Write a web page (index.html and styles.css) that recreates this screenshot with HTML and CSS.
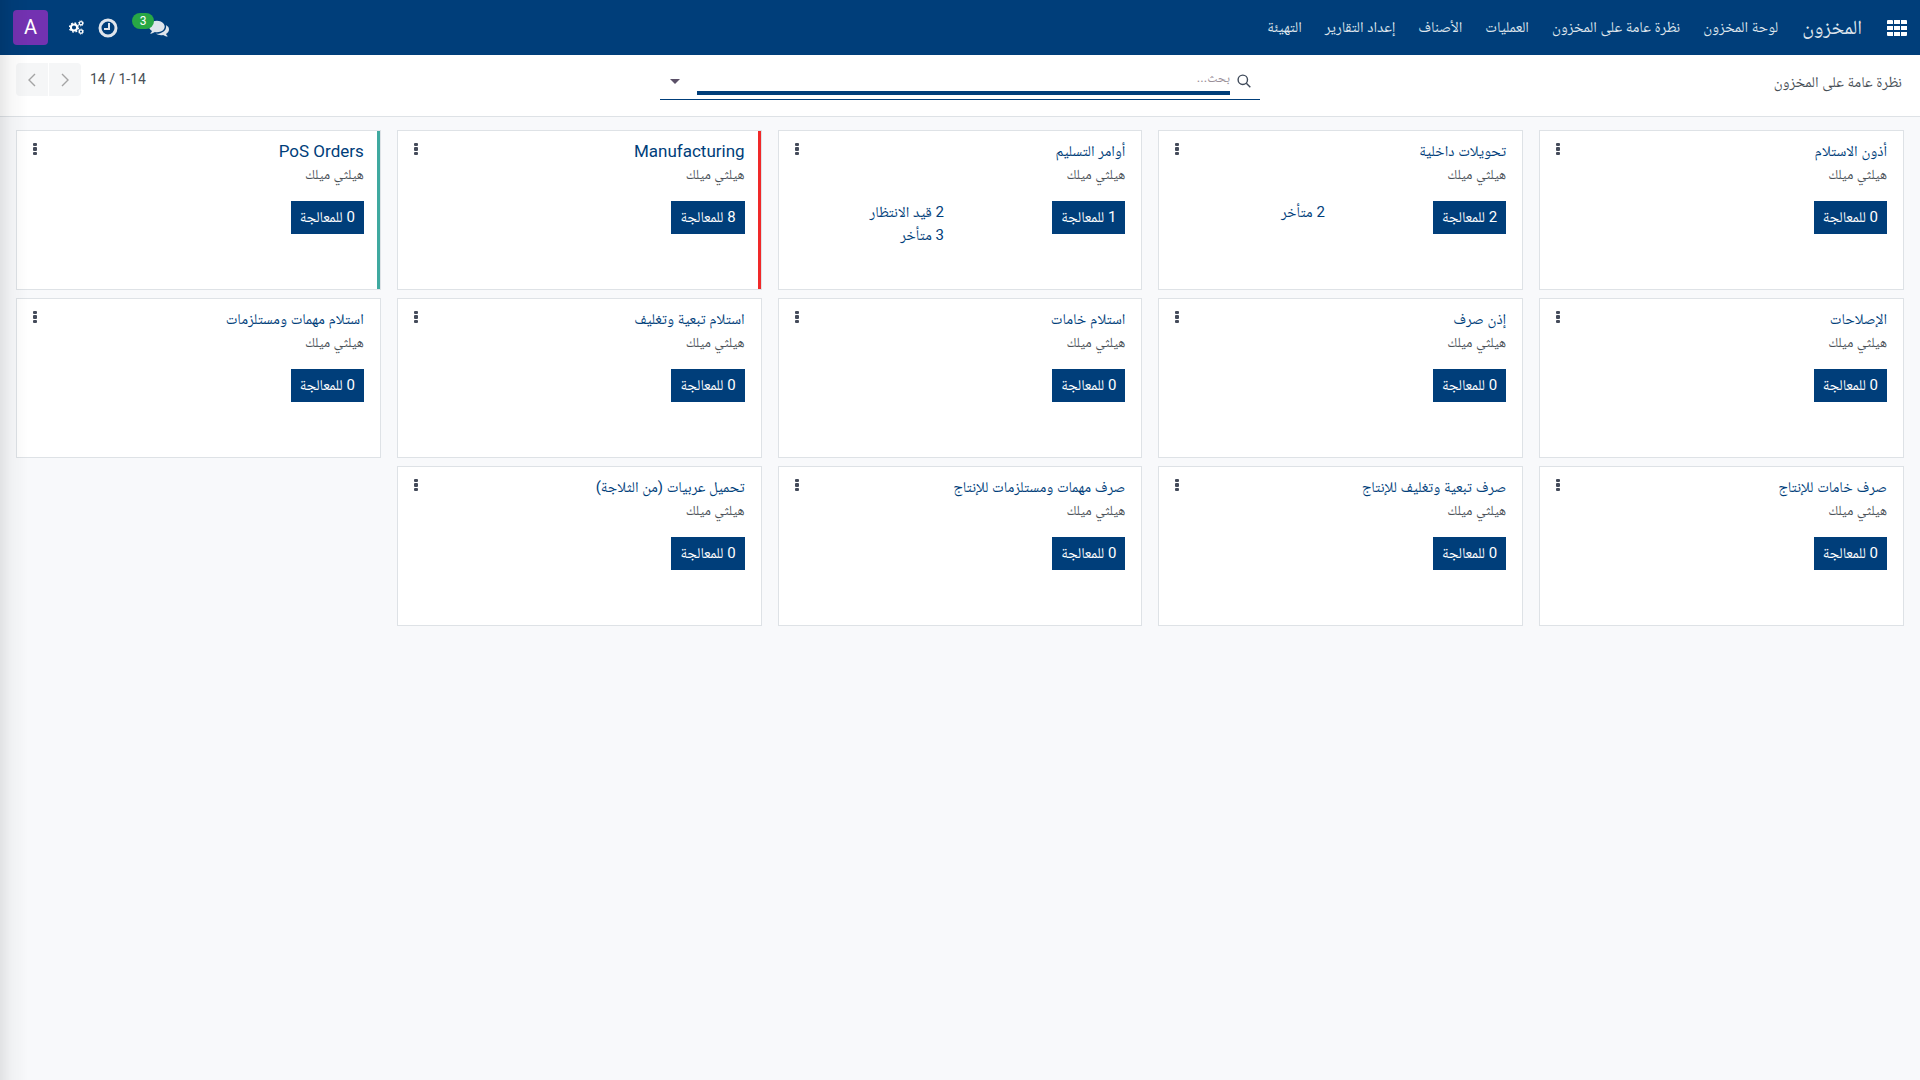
FILE: index.html
```html
<!DOCTYPE html>
<html lang="ar" dir="rtl">
<head>
<meta charset="utf-8">
<meta name="viewport" content="width=device-width, initial-scale=1">
<title>نظرة عامة على المخزون</title>
<link rel="stylesheet" href="styles.css">
</head>
<body>
<svg class="sprite" aria-hidden="true">
  <symbol id="kebab" viewBox="0 0 4 12"><path d="M1 0h2q1 0 1 1v1q0 1-1 1H1Q0 3 0 2V1Q0 0 1 0zM1 4h2q1 0 1 1v2q0 1-1 1H1Q0 8 0 7V5q0-1 1-1zM1 9h2q1 0 1 1v1q0 1-1 1H1q-1 0-1-1v-1q0-1 1-1z"/></symbol>
</svg>

<header class="navbar">
  <button class="apps" aria-label="التطبيقات">
    <svg viewBox="0 0 20 16" width="20" height="16"><path d="M1 0h4q1 0 1 1v3H0V1Q0 0 1 0zM7 0h6v4H7zM14 0h5q1 0 1 1v3h-6zM0 6h6v4H0zM7 6h6v4H7zM14 6h6v4h-6zM0 12h6v4H1q-1 0-1-1zM7 12h6v4H7zM14 12h6v3q0 1-1 1h-5z" fill="#fff"/></svg>
  </button>
  <a class="brand" href="#">المخزون</a>
  <nav class="menu">
    <a href="#">لوحة المخزون</a>
    <a href="#">نظرة عامة على المخزون</a>
    <a href="#">العمليات</a>
    <a href="#">الأصناف</a>
    <a href="#">إعداد التقارير</a>
    <a href="#">التهيئة</a>
  </nav>
  <div class="systray">
    <button class="messages" aria-label="المحادثات">
      <svg viewBox="0 0 1792 1792" width="20" height="20"><path d="M1408 768q0 139-94 257t-256.500 186.500-353.500 68.500q-86 0-176-16-124 88-278 128-36 9-86 16h-3q-11 0-20.500-8t-11.500-21q-1-3-1-6.500t.5-6.500 2-6l2.500-5 3.500-5.500 4-5 4.500-5 4-4.500q5-6 23-25t26-29.500 22.500-29 25-38.500 20.500-44q-124-72-195-177t-71-224q0-139 94-257t256.500-186.500 353.500-68.500 353.500 68.500 256.500 186.500 94 257zm384 256q0 120-71 224.500t-195 176.500q10 24 20.500 44t25 38.500 22.500 29 26 29.500 23 25q1 1 4 4.500t4.500 5 4 5 3.500 5.500l2.500 5 2 6 .5 6.500-1 6.500q-3 14-13 22t-22 7q-50-7-86-16-154-40-278-128-90 16-176 16-271 0-472-132 58 4 88 4 161 0 309-45t264-129q125-92 192-212t67-254q0-77-23-152 129 71 204 178t75 230z" fill="#dfe5ec"/></svg>
      <span class="badge">3</span>
    </button>
    <button aria-label="الأنشطة">
      <svg viewBox="0 0 20 20" width="20" height="20" fill="none" stroke="#dfe5ec"><circle cx="10" cy="10" r="8" stroke-width="3"/><path d="M11 5v6H6" stroke-width="2"/></svg>
    </button>
    <button aria-label="الإعدادات">
      <svg viewBox="0 0 15 15" width="15" height="15" fill="none" stroke="#fff"><circle cx="5" cy="7.500" r="3.100" stroke-width="2"/><circle cx="5" cy="7.500" r="4.500" stroke-width="1.400" stroke-dasharray="1.770 1.764"/><circle cx="12" cy="3.300" r="1.700" stroke-width="1.300"/><circle cx="12" cy="3.300" r="2.600" stroke-width=".8" stroke-dasharray="1.020"/><circle cx="12" cy="11.600" r="1.700" stroke-width="1.300"/><circle cx="12" cy="11.600" r="2.600" stroke-width=".8" stroke-dasharray="1.020"/></svg>
    </button>
    <button class="avatar">A</button>
  </div>
</header>

<section class="control-panel">
  <h1 class="breadcrumb">نظرة عامة على المخزون</h1>
  <form class="search" role="search">
    <svg viewBox="0 0 14 14" width="14" height="14" fill="none" stroke="#3f4a5a" stroke-width="1.400"><circle cx="5.800" cy="5.800" r="4.700"/><path d="M9.300 9.300l4 4"/></svg>
    <input type="text" placeholder="بحث..." aria-label="بحث">
    <button type="button" class="toggle" aria-label="خيارات البحث"><svg viewBox="0 0 10 5" width="10" height="5"><path d="M0 0h10L5 5z" fill="#5b5068"/></svg></button>
  </form>
  <div class="pager">
    <span class="count">1-14 / 14</span>
    <div class="pager-buttons">
      <button aria-label="السابق"><svg viewBox="0 0 8 14" width="8" height="14"><path d="M1 1l6 6-6 6"/></svg></button>
      <button aria-label="التالي"><svg viewBox="0 0 8 14" width="8" height="14"><path d="M7 1L1 7l6 6"/></svg></button>
    </div>
  </div>
</section>

<main class="kanban">
  <article class="card">
    <div class="card-head"><a href="#">أذون الاستلام</a><button class="kebab" aria-label="قائمة"><svg width="4" height="12"><use href="#kebab"/></svg></button></div>
    <p class="company">هيلثي ميلك</p>
    <div class="card-body"><div><button class="process">0 للمعالجة</button></div></div>
  </article>
  <article class="card">
    <div class="card-head"><a href="#">تحويلات داخلية</a><button class="kebab" aria-label="قائمة"><svg width="4" height="12"><use href="#kebab"/></svg></button></div>
    <p class="company">هيلثي ميلك</p>
    <div class="card-body"><div><button class="process">2 للمعالجة</button></div><div class="stats"><a href="#">2 متأخر</a></div></div>
  </article>
  <article class="card">
    <div class="card-head"><a href="#">أوامر التسليم</a><button class="kebab" aria-label="قائمة"><svg width="4" height="12"><use href="#kebab"/></svg></button></div>
    <p class="company">هيلثي ميلك</p>
    <div class="card-body"><div><button class="process">1 للمعالجة</button></div><div class="stats"><a href="#">2 قيد الانتظار</a><a href="#">3 متأخر</a></div></div>
  </article>
  <article class="card card-red">
    <div class="card-head"><a class="latin" href="#">Manufacturing</a><button class="kebab" aria-label="قائمة"><svg width="4" height="12"><use href="#kebab"/></svg></button></div>
    <p class="company">هيلثي ميلك</p>
    <div class="card-body"><div><button class="process">8 للمعالجة</button></div></div>
  </article>
  <article class="card card-teal">
    <div class="card-head"><a class="latin" href="#">PoS Orders</a><button class="kebab" aria-label="قائمة"><svg width="4" height="12"><use href="#kebab"/></svg></button></div>
    <p class="company">هيلثي ميلك</p>
    <div class="card-body"><div><button class="process">0 للمعالجة</button></div></div>
  </article>
  <article class="card">
    <div class="card-head"><a href="#">الإصلاحات</a><button class="kebab" aria-label="قائمة"><svg width="4" height="12"><use href="#kebab"/></svg></button></div>
    <p class="company">هيلثي ميلك</p>
    <div class="card-body"><div><button class="process">0 للمعالجة</button></div></div>
  </article>
  <article class="card">
    <div class="card-head"><a href="#">إذن صرف</a><button class="kebab" aria-label="قائمة"><svg width="4" height="12"><use href="#kebab"/></svg></button></div>
    <p class="company">هيلثي ميلك</p>
    <div class="card-body"><div><button class="process">0 للمعالجة</button></div></div>
  </article>
  <article class="card">
    <div class="card-head"><a href="#">استلام خامات</a><button class="kebab" aria-label="قائمة"><svg width="4" height="12"><use href="#kebab"/></svg></button></div>
    <p class="company">هيلثي ميلك</p>
    <div class="card-body"><div><button class="process">0 للمعالجة</button></div></div>
  </article>
  <article class="card">
    <div class="card-head"><a href="#">استلام تبعية وتغليف</a><button class="kebab" aria-label="قائمة"><svg width="4" height="12"><use href="#kebab"/></svg></button></div>
    <p class="company">هيلثي ميلك</p>
    <div class="card-body"><div><button class="process">0 للمعالجة</button></div></div>
  </article>
  <article class="card">
    <div class="card-head"><a href="#">استلام مهمات ومستلزمات</a><button class="kebab" aria-label="قائمة"><svg width="4" height="12"><use href="#kebab"/></svg></button></div>
    <p class="company">هيلثي ميلك</p>
    <div class="card-body"><div><button class="process">0 للمعالجة</button></div></div>
  </article>
  <article class="card">
    <div class="card-head"><a href="#">صرف خامات للإنتاج</a><button class="kebab" aria-label="قائمة"><svg width="4" height="12"><use href="#kebab"/></svg></button></div>
    <p class="company">هيلثي ميلك</p>
    <div class="card-body"><div><button class="process">0 للمعالجة</button></div></div>
  </article>
  <article class="card">
    <div class="card-head"><a href="#">صرف تبعية وتغليف للإنتاج</a><button class="kebab" aria-label="قائمة"><svg width="4" height="12"><use href="#kebab"/></svg></button></div>
    <p class="company">هيلثي ميلك</p>
    <div class="card-body"><div><button class="process">0 للمعالجة</button></div></div>
  </article>
  <article class="card">
    <div class="card-head"><a href="#">صرف مهمات ومستلزمات للإنتاج</a><button class="kebab" aria-label="قائمة"><svg width="4" height="12"><use href="#kebab"/></svg></button></div>
    <p class="company">هيلثي ميلك</p>
    <div class="card-body"><div><button class="process">0 للمعالجة</button></div></div>
  </article>
  <article class="card">
    <div class="card-head"><a href="#">تحميل عربيات (من الثلاجة)</a><button class="kebab" aria-label="قائمة"><svg width="4" height="12"><use href="#kebab"/></svg></button></div>
    <p class="company">هيلثي ميلك</p>
    <div class="card-body"><div><button class="process">0 للمعالجة</button></div></div>
  </article>
</main>
</body>
</html>
```
FILE: styles.css
```css
:root {
  --primary: #003e7a;
  --text: #495057;
  --line: #dee2e6;
}

* { box-sizing: border-box; }

body {
  margin: 0;
  min-height: 100vh;
  background: #f8f9fb;
  color: var(--text);
  font: 14px/21px Roboto, "Noto Naskh Arabic", "Noto Sans", sans-serif;
}

/* soft shade along the left edge of the window */
body::after {
  content: "";
  position: fixed;
  inset: 0 auto 0 0;
  width: 28px;
  background: linear-gradient(to right, rgba(0, 0, 0, .09), rgba(0, 0, 0, .03) 40%, rgba(0, 0, 0, 0));
  pointer-events: none;
}

a { color: inherit; text-decoration: none; }

button {
  border: 0;
  padding: 0;
  background: none;
  color: inherit;
  font: inherit;
  cursor: pointer;
}

svg { display: block; }

.sprite { display: none; }

/* top bar */
.navbar {
  display: flex;
  align-items: center;
  height: 55px;
  padding: 0 13px;
  background: var(--primary);
  color: #dfe5ec;
}

.brand { margin: 0 25px 0 24px; font-size: 20px; }

.menu { display: flex; gap: 23px; font-size: 15px; }

.systray {
  display: flex;
  align-items: center;
  gap: 14px;
  margin-right: auto;
}

.messages { position: relative; margin-left: -1px; }

.badge {
  position: absolute;
  top: -5px;
  left: -17px;
  width: 22px;
  border-radius: 8px;
  background: #28a745;
  color: #fff;
  font-size: 12px;
  line-height: 16px;
}

.messages { margin-left: 17px; }

.avatar {
  width: 35px;
  height: 35px;
  margin-right: 7px;
  border-radius: 4px;
  background: #7332b1;
  color: #fff;
  font-size: 20px;
}

/* breadcrumb, search and pager */
.control-panel {
  display: grid;
  grid-template-columns: 1fr 600px 1fr;
  align-items: start;
  height: 62px;
  padding: 8px 18px;
  border-bottom: 1px solid var(--line);
  background: #fff;
}

.breadcrumb { margin: 9px 0 0; font-size: 15px; font-weight: 400; }

.search {
  display: flex;
  align-items: center;
  gap: 7px;
  height: 37px;
  padding: 0 9px 0 10px;
  border-bottom: 1px solid var(--primary);
}

.search input {
  flex: 1;
  align-self: flex-start;
  min-width: 0;
  height: 32px;
  padding: 0;
  border: 0;
  border-bottom: 4px solid var(--primary);
  outline: 0;
  background: none;
  color: inherit;
  font: inherit;
}

.search input::placeholder { color: #9a9098; opacity: 1; font-size: 13px; }

.toggle { padding: 0 10px 0 0; }

.pager { display: flex; justify-content: flex-end; gap: 9px; margin-left: -2px; }

.count { margin-top: 6px; }

.pager-buttons { display: flex; gap: 1px; }

.pager-buttons button {
  display: grid;
  place-items: center;
  width: 32px;
  height: 33px;
  background: #f5f6f7;
}

.pager-buttons button:first-child { border-radius: 0 4px 4px 0; }
.pager-buttons button:last-child { border-radius: 4px 0 0 4px; }

.pager-buttons path { fill: none; stroke: #a4a4a4; stroke-width: 1.4; }

/* operation cards */
.kanban {
  display: grid;
  grid-template-columns: repeat(auto-fill, minmax(320px, 1fr));
  gap: 8px 16px;
  padding: 13px 16px;
}

.card {
  min-height: 160px;
  padding: 8px 16px;
  border: 1px solid var(--line);
  background: #fff;
}

.card-red { box-shadow: inset -3px 0 #f02929; }
.card-teal { box-shadow: inset -3px 0 #3fa9a0; }

.card-head {
  display: flex;
  justify-content: space-between;
  color: var(--primary);
  font-size: 15px;
  line-height: 24px;
}

.latin { font-size: 17px; }

.kebab { height: 20px; color: var(--text); }
.kebab svg { fill: #444b5a; }

.company { margin: 0; font-size: 14px; line-height: 22px; }

.card-body { display: grid; grid-template-columns: 1fr 1fr; gap: 32px; padding-top: 16px; }

.process {
  height: 33px;
  padding: 0 9px;
  background: var(--primary);
  color: #fff;
  font-size: 15px;
}

.stats { display: flex; flex-direction: column; color: var(--primary); font-size: 15px; line-height: 23px; }
```
